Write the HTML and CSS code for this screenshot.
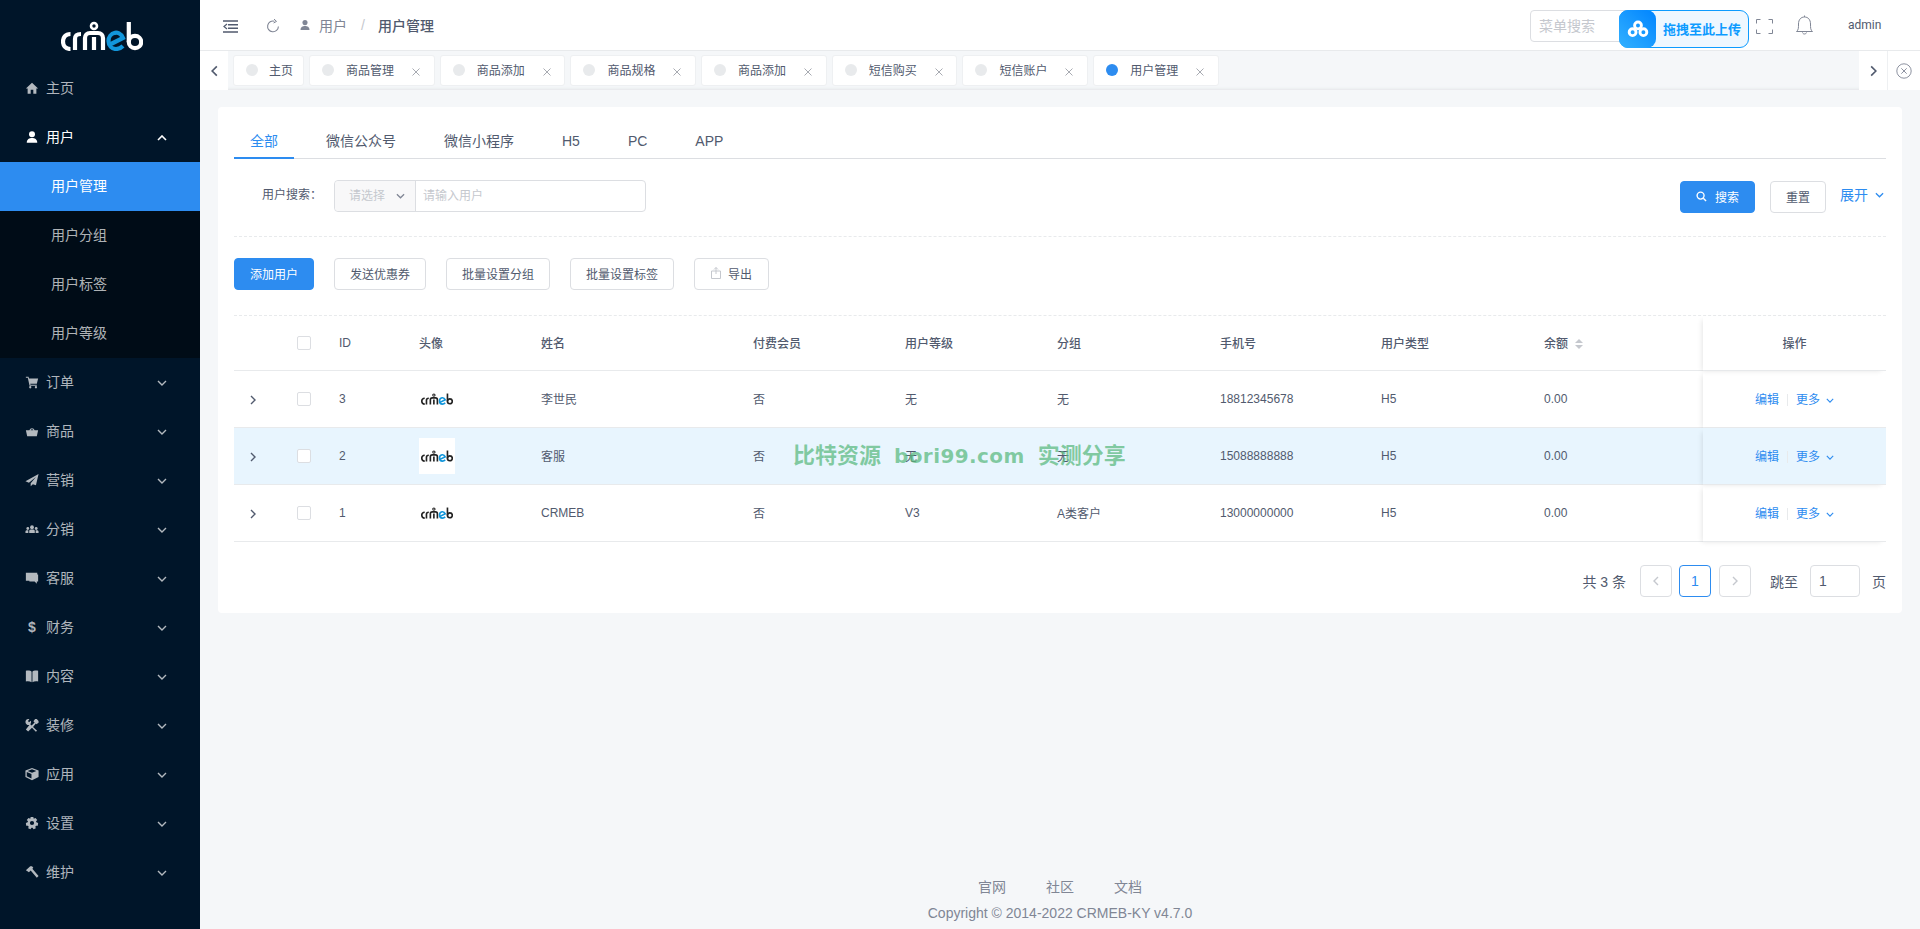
FILE: index.html
```html
<!DOCTYPE html>
<html lang="zh-CN">
<head>
    <title>用户管理</title>
    <meta charset="UTF-8">
    <link rel="stylesheet" href="styles.css">
</head>
<body>
    <svg class="defs" width="0" height="0">
        <defs>
            <symbol id="logo" viewBox="0 0 82 30">
                <g fill="none" stroke="currentColor" stroke-width="4.2">
                    <path d="M9.5 13 C4 13 2 17 2 20.5 S4 28 9.5 28"/>
                    <path d="M14 29 V18 C14 14 16 13 20 13"/>
                    <path d="M24 29 V17 C24 14 26 12 29 12 H37 C40 12 42 14 42 17 V29 M33 16 V29"/>
                    <circle cx="33" cy="5" r="3" stroke-width="2.6"/>
                    <circle cx="74" cy="21" r="6.2"/>
                    <path d="M67.8 1 V21"/>
                </g>
                <g fill="none" stroke="#1296db" stroke-width="4.2">
                    <path d="M50 23 L62 17 C60 12 56 11.5 54 11.8 C50 12.5 47.5 16 47.5 20 C47.5 25 51 28 55 28 C58 28 60 27 62 25"/>
                </g>
            </symbol>
            <symbol id="down" viewBox="0 0 10 6"><polyline points="1,1 5,5 9,1" fill="none" stroke="currentColor" stroke-width="1.4"/></symbol>
            <symbol id="up" viewBox="0 0 10 6"><polyline points="1,5 5,1 9,5" fill="none" stroke="currentColor" stroke-width="1.6"/></symbol>
            <symbol id="left" viewBox="0 0 6 10"><polyline points="5,1 1,5 5,9" fill="none" stroke="currentColor" stroke-width="1.4"/></symbol>
            <symbol id="right" viewBox="0 0 6 10"><polyline points="1,1 5,5 1,9" fill="none" stroke="currentColor" stroke-width="1.4"/></symbol>
            <symbol id="close" viewBox="0 0 8 8"><path d="M.5 .5 L7.5 7.5 M7.5 .5 L.5 7.5" stroke="currentColor" stroke-width="1" fill="none"/></symbol>
            <symbol id="i-home" viewBox="0 0 16 16"><path d="M8 2 L1 8.5 H3 V14.5 H6.5 V10 H9.5 V14.5 H13 V8.5 H15 Z"/></symbol>
            <symbol id="i-user" viewBox="0 0 16 16"><circle cx="8" cy="4.8" r="3.4"/><path d="M2 14.5 C2 10.5 5 9.2 8 9.2 S14 10.5 14 14.5 Z"/></symbol>
            <symbol id="i-cart" viewBox="0 0 16 16"><path d="M1 2 H4 L4.6 4 H15 L13.5 10 H6 L6.3 11 H13.5 V12.2 H5.2 L3.2 3.2 H1 Z"/><circle cx="6" cy="14" r="1.3"/><circle cx="12.5" cy="14" r="1.3"/></symbol>
            <symbol id="i-bag" viewBox="0 0 16 16"><path d="M1 7 H15 L13.5 14 H2.5 Z M5 7 A3.2 3.2 0 0 1 11 7 H9.6 A1.8 1.8 0 0 0 6.4 7 Z"/></symbol>
            <symbol id="i-send" viewBox="0 0 16 16"><path d="M15.5 1 L.5 9.5 L4.5 11 L12.5 4.5 L6.5 11.8 V15 L9 12.8 L12.5 14 Z"/></symbol>
            <symbol id="i-group" viewBox="0 0 16 16"><circle cx="8" cy="6" r="2.2"/><circle cx="3.2" cy="7.4" r="1.6"/><circle cx="12.8" cy="7.4" r="1.6"/><path d="M4.8 12.5 V10.5 C4.8 9 6 8.6 8 8.6 S11.2 9 11.2 10.5 V12.5 Z M.5 12.5 V11 C.5 9.8 1.8 9.4 3.8 9.6 V12.5 Z M15.5 12.5 V11 C15.5 9.8 14.2 9.4 12.2 9.6 V12.5 Z"/></symbol>
            <symbol id="i-chat" viewBox="0 0 16 16"><path d="M1 2 H14 V4 H15 V12 H13.5 V14.5 L11 12 H5 V11 H1 Z"/></symbol>
            <symbol id="i-book" viewBox="0 0 16 16"><path d="M1 2 C4 1.5 6.5 2 7.5 3 V15 C6 14 3.5 13.8 1 14.2 Z M15 2 C12 1.5 9.5 2 8.5 3 V15 C10 14 12.5 13.8 15 14.2 Z"/></symbol>
            <symbol id="i-tools" viewBox="0 0 16 16"><path d="M.5 4.5 C.5 2 3 .5 5 1.5 L3.4 3.4 L4.6 4.8 L6.6 3.2 C7.4 5 6.8 6.4 6 7 L7.6 8.6 L11 5 L9.6 3.6 L11.6 1 H13.4 L15.5 3.4 V5.4 L13 7 L12.4 6.4 L9.2 10.2 L13.8 14.6 L12.4 15.6 L8 11.2 L3.6 15.4 L1 13 L5 8 C3 8.4 .5 7 .5 4.5 Z"/></symbol>
            <symbol id="i-cube" viewBox="0 0 16 16"><path d="M8 1 L15.5 4 V11.5 L8 15 L.5 11.5 V4 Z M8 2.6 L3 4.6 L8 6.6 L13 4.6 Z M7.4 8 L2 5.8 V10.6 L7.4 13.2 Z"/></symbol>
            <symbol id="i-gear" viewBox="0 0 16 16"><path fill-rule="evenodd" d="M6.5 1 H9.5 L10 3 L12 2.2 L14 4.6 L12.6 6 L13 7.2 L15 8 L14.6 11 L12.6 11 L11.8 12.2 L12.4 14 L9.8 15 L8.6 13.4 H7.4 L6.2 15 L3.6 14 L4.2 12.2 L3.4 11 L1.4 11 L1 8 L3 7.2 L3.4 6 L2 4.6 L4 2.2 L6 3 Z M8 5.6 A2.4 2.4 0 1 0 8 10.4 A2.4 2.4 0 1 0 8 5.6 Z"/></symbol>
            <symbol id="i-hammer" viewBox="0 0 16 16"><path d="M1 6 L6 1.5 H8 L9.5 3 L8.4 4.2 L15.5 12.5 L13.5 14.5 L6.5 6.2 L4.5 8.2 Z"/></symbol>
        </defs>
    </svg>

    <div class="app">
        <aside class="sidebar">
            <div class="brand"><svg class="brand-logo"><use href="#logo"/></svg></div>
            <a class="menu-item"><svg class="menu-icon"><use href="#i-home"/></svg>主页</a>
            <a class="menu-item open"><svg class="menu-icon"><use href="#i-user"/></svg>用户<svg class="menu-arrow"><use href="#up"/></svg></a>
            <div class="submenu">
                <a class="sub-item active">用户管理</a>
                <a class="sub-item">用户分组</a>
                <a class="sub-item">用户标签</a>
                <a class="sub-item">用户等级</a>
            </div>
            <a class="menu-item"><svg class="menu-icon"><use href="#i-cart"/></svg>订单<svg class="menu-arrow"><use href="#down"/></svg></a>
            <a class="menu-item"><svg class="menu-icon"><use href="#i-bag"/></svg>商品<svg class="menu-arrow"><use href="#down"/></svg></a>
            <a class="menu-item"><svg class="menu-icon"><use href="#i-send"/></svg>营销<svg class="menu-arrow"><use href="#down"/></svg></a>
            <a class="menu-item"><svg class="menu-icon"><use href="#i-group"/></svg>分销<svg class="menu-arrow"><use href="#down"/></svg></a>
            <a class="menu-item"><svg class="menu-icon"><use href="#i-chat"/></svg>客服<svg class="menu-arrow"><use href="#down"/></svg></a>
            <a class="menu-item"><span class="menu-icon dollar">$</span>财务<svg class="menu-arrow"><use href="#down"/></svg></a>
            <a class="menu-item"><svg class="menu-icon"><use href="#i-book"/></svg>内容<svg class="menu-arrow"><use href="#down"/></svg></a>
            <a class="menu-item"><svg class="menu-icon"><use href="#i-tools"/></svg>装修<svg class="menu-arrow"><use href="#down"/></svg></a>
            <a class="menu-item"><svg class="menu-icon"><use href="#i-cube"/></svg>应用<svg class="menu-arrow"><use href="#down"/></svg></a>
            <a class="menu-item"><svg class="menu-icon"><use href="#i-gear"/></svg>设置<svg class="menu-arrow"><use href="#down"/></svg></a>
            <a class="menu-item"><svg class="menu-icon"><use href="#i-hammer"/></svg>维护<svg class="menu-arrow"><use href="#down"/></svg></a>
        </aside>

        <div class="main">
            <header class="topbar">
                <svg class="top-toggle" viewBox="0 0 15 13" fill="none" stroke="#515a6e" stroke-width="1.4">
                    <path d="M0 1 H15 M5 4.7 H15 M5 8.3 H15 M0 12 H15"/><path d="M4 4 L1 6.5 L4 9" stroke-width="1.2"/>
                </svg>
                <svg class="top-refresh" viewBox="0 0 14 14" fill="none" stroke="#808695" stroke-width="1.1">
                    <path d="M8.5 2.2 A5.4 5.4 0 1 0 12.4 7.5"/><path d="M8 0 L10.5 2.4 L7.6 4" stroke-width="1"/>
                </svg>
                <svg class="crumb-icon"><use href="#i-user"/></svg>
                <span class="crumb">用户</span>
                <span class="crumb-sep">/</span>
                <span class="crumb-now">用户管理</span>

                <div class="top-right">
                    <div class="top-search">
                        <span class="top-input">菜单搜索</span>
                        <div class="upload">
                            <span class="upload-icon">
                                <svg viewBox="0 0 24 20" width="22" height="18" fill="none" stroke="#fff" stroke-width="3.2">
                                    <circle cx="12" cy="6" r="3.8"/><circle cx="6" cy="13.5" r="3.8"/><circle cx="18" cy="13.5" r="3.8"/>
                                </svg>
                            </span>
                            <span class="upload-text">拖拽至此上传</span>
                        </div>
                    </div>
                    <svg class="top-full" viewBox="0 0 17 15" fill="none" stroke="#808695" stroke-width="1">
                        <path d="M.5 4.5 V.5 H4.5 M12.5 .5 H16.5 V4.5 M16.5 10.5 V14.5 H12.5 M4.5 14.5 H.5 V10.5"/>
                    </svg>
                    <svg class="top-bell" viewBox="0 0 17 20" fill="none" stroke="#808695" stroke-width="1">
                        <path d="M.5 16.5 C2.5 15 2.5 13 2.5 9 C2.5 4.5 5 2 8.5 2 S14.5 4.5 14.5 9 C14.5 13 14.5 15 16.5 16.5 Z"/>
                        <path d="M8.5 .5 V2 M6.5 17.5 C7 19.5 10 19.5 10.5 17.5"/>
                    </svg>
                    <span class="top-user">admin</span>
                </div>
            </header>

            <nav class="tabbar">
                <span class="tab-btn"><svg class="tab-arrow"><use href="#left"/></svg></span>
                <div class="page-tabs">
                    <span class="page-tab first"><i class="dot"></i>主页</span>
                    <span class="page-tab"><i class="dot"></i>商品管理<svg class="tab-close"><use href="#close"/></svg></span>
                    <span class="page-tab"><i class="dot"></i>商品添加<svg class="tab-close"><use href="#close"/></svg></span>
                    <span class="page-tab"><i class="dot"></i>商品规格<svg class="tab-close"><use href="#close"/></svg></span>
                    <span class="page-tab"><i class="dot"></i>商品添加<svg class="tab-close"><use href="#close"/></svg></span>
                    <span class="page-tab"><i class="dot"></i>短信购买<svg class="tab-close"><use href="#close"/></svg></span>
                    <span class="page-tab"><i class="dot"></i>短信账户<svg class="tab-close"><use href="#close"/></svg></span>
                    <span class="page-tab"><i class="dot on"></i>用户管理<svg class="tab-close"><use href="#close"/></svg></span>
                </div>
                <span class="tab-btn"><svg class="tab-arrow"><use href="#right"/></svg></span>
                <span class="tab-closeall">
                    <svg viewBox="0 0 16 16" width="16" height="16" fill="none" stroke="#808695" stroke-width=".9">
                        <circle cx="8" cy="8" r="7.2"/><path d="M5.3 5.3 L10.7 10.7 M10.7 5.3 L5.3 10.7"/>
                    </svg>
                </span>
            </nav>

            <div class="content">
                <section class="card">
                    <div class="tabs">
                        <span class="tab active">全部</span>
                        <span class="tab">微信公众号</span>
                        <span class="tab">微信小程序</span>
                        <span class="tab">H5</span>
                        <span class="tab">PC</span>
                        <span class="tab">APP</span>
                    </div>

                    <div class="filter">
                        <span class="filter-label">用户搜索：</span>
                        <div class="field">
                            <span class="field-select">请选择<svg class="field-arrow"><use href="#down"/></svg></span>
                            <span class="field-input">请输入用户</span>
                        </div>
                        <div class="filter-actions">
                            <span class="btn btn-primary btn-search">
                                <svg viewBox="0 0 12 12" width="11" height="11" fill="none" stroke="#fff" stroke-width="1.5"><circle cx="5" cy="5" r="3.8"/><path d="M8 8 L11 11"/></svg>搜索
                            </span>
                            <span class="btn btn-reset">重置</span>
                            <span class="expand">展开<svg class="expand-arrow"><use href="#down"/></svg></span>
                        </div>
                    </div>

                    <div class="actions">
                        <span class="btn btn-primary btn-add">添加用户</span>
                        <span class="btn btn-coupon">发送优惠券</span>
                        <span class="btn btn-batch">批量设置分组</span>
                        <span class="btn btn-batch">批量设置标签</span>
                        <span class="btn btn-export">
                            <svg viewBox="0 0 10 12" width="10" height="12" fill="none" stroke="#c5c8ce" stroke-width="1"><path d="M.5 4 H9.5 V11.5 H.5 Z M5 .5 V7 M3 2.5 L5 .5 L7 2.5"/></svg>导出
                        </span>
                    </div>

                    <div class="table-wrap">
                        <table class="users">
                            <colgroup>
                                <col class="c-exp"><col class="c-chk"><col class="c-id"><col class="c-ava"><col class="c-name">
                                <col class="c-pay"><col class="c-lvl"><col class="c-grp"><col class="c-tel"><col class="c-type">
                                <col class="c-bal"><col class="c-ops">
                            </colgroup>
                            <thead>
                                <tr>
                                    <th></th>
                                    <th><i class="check"></i></th>
                                    <th>ID</th>
                                    <th class="zh">头像</th>
                                    <th class="zh">姓名</th>
                                    <th class="zh">付费会员</th>
                                    <th class="zh">用户等级</th>
                                    <th class="zh">分组</th>
                                    <th class="zh">手机号</th>
                                    <th class="zh">用户类型</th>
                                    <th class="zh">余额<span class="sort"><i class="sort-up"></i><i class="sort-down"></i></span></th>
                                    <th class="ops zh">操作</th>
                                </tr>
                            </thead>
                            <tbody>
                                <tr>
                                    <td><svg class="row-exp"><use href="#right"/></svg></td>
                                    <td><i class="check"></i></td>
                                    <td>3</td>
                                    <td><span class="avatar"><svg class="avatar-logo"><use href="#logo"/></svg></span></td>
                                    <td class="zh">李世民</td>
                                    <td class="zh">否</td>
                                    <td class="zh">无</td>
                                    <td class="zh">无</td>
                                    <td>18812345678</td>
                                    <td>H5</td>
                                    <td>0.00</td>
                                    <td class="ops zh"><a class="link">编辑</a><i class="ops-sep"></i><a class="link">更多<svg class="ops-arrow"><use href="#down"/></svg></a></td>
                                </tr>
                                <tr class="hover">
                                    <td><svg class="row-exp"><use href="#right"/></svg></td>
                                    <td><i class="check"></i></td>
                                    <td>2</td>
                                    <td><span class="avatar"><svg class="avatar-logo"><use href="#logo"/></svg></span></td>
                                    <td class="zh">客服</td>
                                    <td class="zh">否</td>
                                    <td class="zh">无</td>
                                    <td class="zh">无</td>
                                    <td>15088888888</td>
                                    <td>H5</td>
                                    <td>0.00</td>
                                    <td class="ops zh"><a class="link">编辑</a><i class="ops-sep"></i><a class="link">更多<svg class="ops-arrow"><use href="#down"/></svg></a></td>
                                </tr>
                                <tr>
                                    <td><svg class="row-exp"><use href="#right"/></svg></td>
                                    <td><i class="check"></i></td>
                                    <td>1</td>
                                    <td><span class="avatar"><svg class="avatar-logo"><use href="#logo"/></svg></span></td>
                                    <td>CRMEB</td>
                                    <td class="zh">否</td>
                                    <td>V3</td>
                                    <td class="zh">A类客户</td>
                                    <td>13000000000</td>
                                    <td>H5</td>
                                    <td>0.00</td>
                                    <td class="ops zh"><a class="link">编辑</a><i class="ops-sep"></i><a class="link">更多<svg class="ops-arrow"><use href="#down"/></svg></a></td>
                                </tr>
                            </tbody>
                        </table>
                        <div class="watermark"><span>比特资源</span><span class="wm-latin">bori99.com</span><span>实测分享</span></div>
                    </div>

                    <div class="pager">
                        <span class="pager-total">共 3 条</span>
                        <span class="page-btn off"><svg class="page-arrow"><use href="#left"/></svg></span>
                        <span class="page-btn cur">1</span>
                        <span class="page-btn off"><svg class="page-arrow"><use href="#right"/></svg></span>
                        <span class="pager-jump">跳至</span>
                        <span class="pager-input">1</span>
                        <span class="pager-unit">页</span>
                    </div>
                </section>
            </div>

            <footer class="footer">
                <div class="footer-links"><a>官网</a><a>社区</a><a>文档</a></div>
                <div class="copyright">Copyright © 2014-2022 CRMEB-KY v4.7.0</div>
            </footer>
        </div>
    </div>
</body>
</html>
```

FILE: styles.css
```css
* {
    box-sizing: border-box;
}
html, body {
    margin: 0;
    height: 100%;
}
body {
    font-family: "Liberation Sans", "Noto Sans CJK SC", sans-serif;
    font-size: 12px;
    color: #515a6e;
    background: #f5f7f9;
    overflow: hidden;
}
i {
    font-style: normal;
}
.defs {
    position: absolute;
}
.app {
    display: flex;
    height: 100vh;
}

/****** SIDEBAR ******/
.sidebar {
    width: 200px;
    flex: none;
    background: #001529;
    color: rgba(255, 255, 255, 0.7);
    font-size: 14px;
}
.brand {
    height: 64px;
    padding: 21px 0 0 61px;
}
.brand-logo {
    display: block;
    width: 82px;
    height: 30px;
    color: #fff;
}
.menu-item {
    display: flex;
    align-items: center;
    height: 49px;
    padding: 0 0 3px 25px;
}
.menu-item.open {
    color: #fff;
}
.menu-icon {
    width: 14px;
    height: 14px;
    margin: 2px 7px 0 0;
    fill: currentColor;
    flex: none;
}
.dollar {
    font-weight: 700;
    font-size: 14px;
    line-height: 14px;
    text-align: center;
}
.menu-arrow {
    width: 10px;
    height: 6px;
    margin: 3px 33px 0 auto;
}
.submenu {
    background: #000c17;
}
.sub-item {
    display: flex;
    align-items: center;
    height: 49px;
    padding: 0 0 3px 51px;
}
.sub-item.active {
    background: #2d8cf0;
    color: #fff;
}

/****** HEADER ******/
.main {
    flex: 1;
    min-width: 0;
    display: flex;
    flex-direction: column;
}
.topbar {
    display: flex;
    align-items: center;
    height: 50px;
    flex: none;
    background: #fff;
    padding-left: 23px;
    font-size: 14px;
}
.top-toggle {
    width: 15px;
    height: 13px;
    margin-top: 2px;
}
.top-refresh {
    width: 14px;
    height: 14px;
    margin: 2px 0 0 28px;
}
.crumb-icon {
    width: 12px;
    height: 12px;
    fill: #808695;
    margin-left: 19px;
}
.crumb {
    color: #808695;
    margin-left: 8px;
}
.crumb-sep {
    color: #c5c8ce;
    margin: 0 13px 0 14px;
}
.crumb-now {
    color: #515a6e;
    font-weight: 500;
}
.top-right {
    display: flex;
    align-items: center;
    margin-left: auto;
    padding-right: 40px;
}
.top-search {
    position: relative;
    width: 219px;
    height: 32px;
    margin-top: 1px;
}
.top-input {
    display: block;
    width: 190px;
    height: 32px;
    line-height: 30px;
    padding-left: 8px;
    color: #c5c8ce;
    font-size: 14px;
    border: 1px solid #dcdee2;
    border-radius: 4px;
}
.upload {
    position: absolute;
    left: 89px;
    top: 0;
    display: flex;
    align-items: center;
    width: 130px;
    height: 38px;
    background: #eef7ff;
    border: 1px solid #0d9bff;
    border-radius: 9px;
}
.upload-icon {
    display: flex;
    align-items: center;
    justify-content: center;
    width: 37px;
    height: 38px;
    margin: -1px 0 -1px -1px;
    border-radius: 9px;
    background: linear-gradient(45deg, #33b1ff, #0084ff);
}
.upload-text {
    margin-left: 7px;
    font-size: 13px;
    font-weight: 700;
    color: #0d9bff;
    white-space: nowrap;
}
.top-full {
    width: 17px;
    height: 15px;
    margin-left: 7px;
    margin-top: 2px;
}
.top-bell {
    width: 17px;
    height: 20px;
    margin-left: 23px;
}
.top-user {
    margin-left: 35px;
    width: 32px;
    font-family: Roboto, "Liberation Sans", sans-serif;
    font-size: 12px;
}

/****** TABS BAR ******/
.tabbar {
    display: flex;
    align-items: stretch;
    height: 40px;
    flex: none;
    border-top: 1px solid #e8eaec;
    box-shadow: inset 0 -3px 3px -2px #e3e5e8;
    background: #f5f7f9;
}
.tab-btn {
    display: flex;
    align-items: center;
    justify-content: center;
    width: 28px;
    background: #fff;
}
.tab-arrow {
    width: 7px;
    height: 12px;
    color: #515a6e;
}
.page-tabs {
    flex: 1;
    display: flex;
    gap: 5px;
    padding: 4px 0 0 5px;
}
.page-tab {
    display: flex;
    align-items: center;
    width: 125.7px;
    height: 31px;
    padding: 0 0 2px 12px;
    background: #fff;
    border: 1px solid #eef0f2;
    border-radius: 3px;
}
.page-tab.first {
    width: 71px;
}
.page-tab.first .dot {
    margin-right: 11px;
}
.dot {
    width: 12px;
    height: 12px;
    margin-right: 12px;
    border-radius: 50%;
    background: #e8eaec;
    flex: none;
}
.dot.on {
    background: #2d8cf0;
}
.tab-close {
    width: 8px;
    height: 8px;
    margin-left: 18px;
    margin-top: 4px;
    color: #a8abb2;
}
.tab-closeall {
    display: flex;
    align-items: center;
    justify-content: center;
    width: 33px;
    background: #fff;
    border-left: 1px solid #eef0f2;
}

/****** CARD ******/
.content {
    flex: 1;
    padding: 17px 18px 0;
}
.card {
    background: #fff;
    border-radius: 4px;
    padding: 16px 16px 16px;
}
.tabs {
    display: flex;
    gap: 16px;
    border-bottom: 1px solid #dcdee2;
    font-size: 14px;
    height: 36px;
}
.tab {
    padding: 8px 16px 6px;
    line-height: 20px;
    height: 36px;
}
.tab.active {
    color: #2d8cf0;
    border-bottom: 2px solid #2d8cf0;
}
.filter {
    display: flex;
    align-items: flex-start;
    margin-top: 21px;
    height: 34px;
}
.filter-label {
    width: 88px;
    margin-right: 12px;
    line-height: 30px;
    text-align: right;
}
.field {
    display: flex;
    width: 312px;
    height: 32px;
    border: 1px solid #dcdee2;
    border-radius: 4px;
    line-height: 30px;
    color: #c5c8ce;
}
.field-select {
    display: flex;
    align-items: center;
    width: 81px;
    padding-left: 14px;
    background: #f8f8f9;
    border-right: 1px solid #dcdee2;
    border-radius: 4px 0 0 4px;
}
.field-arrow {
    width: 9px;
    height: 6px;
    margin-left: 11px;
    color: #808695;
}
.field-input {
    padding-left: 7px;
}
.filter-actions {
    display: flex;
    align-items: flex-start;
    margin-left: auto;
    padding-top: 1px;
}
.btn {
    display: inline-flex;
    align-items: center;
    justify-content: center;
    height: 32px;
    padding-bottom: 2px;
    border: 1px solid #dcdee2;
    border-radius: 4px;
    background: #fff;
}
.btn-primary {
    background: #2d8cf0;
    border-color: #2d8cf0;
    color: #fff;
}
.btn-search {
    width: 75px;
    gap: 8px;
}
.btn-reset {
    width: 56px;
    margin-left: 15px;
}
.expand {
    display: flex;
    align-items: center;
    margin-left: 14px;
    width: 46px;
    color: #2d8cf0;
    font-size: 14px;
    line-height: 28px;
}
.expand-arrow {
    width: 9px;
    height: 6px;
    margin-left: 7px;
}
.actions {
    display: flex;
    gap: 20px;
    margin-top: 22px;
    padding-top: 21px;
    border-top: 1px dashed #e8eaec;
}
.btn-add {
    width: 80px;
}
.btn-coupon {
    width: 92px;
}
.btn-batch {
    width: 104px;
}
.btn-export {
    width: 75px;
    gap: 7px;
}

/****** TABLE ******/
.table-wrap {
    position: relative;
    margin-top: 25px;
}
.users {
    width: 100%;
    table-layout: fixed;
    border-collapse: separate;
    border-spacing: 0;
    border-top: 1px dashed #e8eaec;
}
.c-exp { width: 63px; }
.c-chk { width: 42px; }
.c-id { width: 80px; }
.c-ava { width: 122px; }
.c-name { width: 212px; }
.c-pay { width: 152px; }
.c-lvl { width: 152px; }
.c-grp { width: 163px; }
.c-tel { width: 161px; }
.c-type { width: 163px; }
.c-bal { width: 159px; }
.c-ops { width: 183px; }
.users th,
.users td {
    padding: 0;
    text-align: left;
    border-bottom: 1px solid #e8eaec;
    font-size: 12px;
}
.users th {
    height: 55px;
    font-weight: 500;
}
.users td {
    height: 57px;
}
.users .zh {
    padding-bottom: 2px;
}
.users .ops {
    text-align: center;
    box-shadow: -3px 2px 5px -2px rgba(0, 0, 0, 0.1);
}
.hover td {
    background: #e8f5fe;
}
.check {
    display: block;
    width: 14px;
    height: 14px;
    background: #fff;
    border: 1px solid #dcdee2;
    border-radius: 2px;
}
.row-exp {
    display: block;
    width: 6px;
    height: 10px;
    margin: 2px 0 0 16px;
}
.sort {
    display: inline-block;
    width: 8px;
    margin-left: 7px;
    vertical-align: -1px;
}
.sort-up,
.sort-down {
    display: block;
    width: 0;
    border-left: 4px solid transparent;
    border-right: 4px solid transparent;
}
.sort-up {
    border-bottom: 4px solid #c5c8ce;
    margin-bottom: 2px;
}
.sort-down {
    border-top: 4px solid #c5c8ce;
}
.avatar {
    display: flex;
    align-items: center;
    justify-content: center;
    width: 36px;
    height: 36px;
    background: #fff;
}
.avatar-logo {
    width: 32px;
    height: 12px;
    color: #222;
}
.link {
    color: #2d8cf0;
}
.ops-sep {
    display: inline-block;
    width: 1px;
    height: 12px;
    margin: 0 8px;
    background: #e8eaec;
    vertical-align: -2px;
}
.ops-arrow {
    width: 8px;
    height: 5px;
    margin-left: 6px;
    vertical-align: 1px;
}
.watermark {
    position: absolute;
    left: 559px;
    top: 123px;
    display: flex;
    gap: 13px;
    color: rgba(88, 185, 125, 0.72);
    font-size: 22px;
    font-weight: 700;
    line-height: 36px;
    white-space: nowrap;
}
.wm-latin {
    font-family: "DejaVu Sans", sans-serif;
    font-size: 20px;
    letter-spacing: 0.4px;
}

/****** PAGER ******/
.pager {
    display: flex;
    align-items: center;
    justify-content: flex-end;
    margin-top: 23px;
    height: 32px;
}
.pager-total {
    margin-right: 14px;
    font-size: 14px;
}
.page-btn {
    display: flex;
    align-items: center;
    justify-content: center;
    width: 32px;
    height: 32px;
    margin-right: 7px;
    border: 1px solid #dcdee2;
    border-radius: 4px;
    font-size: 14px;
}
.page-btn.cur {
    margin-right: 8px;
    border-color: #2d8cf0;
    color: #2d8cf0;
}
.page-arrow {
    width: 6px;
    height: 10px;
    color: #c5c8ce;
}
.pager-jump {
    margin-left: 12px;
    font-size: 14px;
}
.pager-input {
    width: 50px;
    height: 32px;
    margin-left: 12px;
    padding-left: 8px;
    line-height: 30px;
    border: 1px solid #dcdee2;
    border-radius: 4px;
    font-size: 14px;
}
.pager-unit {
    margin-left: 12px;
    font-size: 14px;
}

/****** FOOTER ******/
.footer {
    flex: none;
    height: 52px;
    text-align: center;
    color: #808695;
    font-size: 14px;
}
.footer-links {
    display: flex;
    justify-content: center;
    gap: 40px;
    line-height: 20px;
}
.copyright {
    margin-top: 6px;
    line-height: 20px;
}
```
